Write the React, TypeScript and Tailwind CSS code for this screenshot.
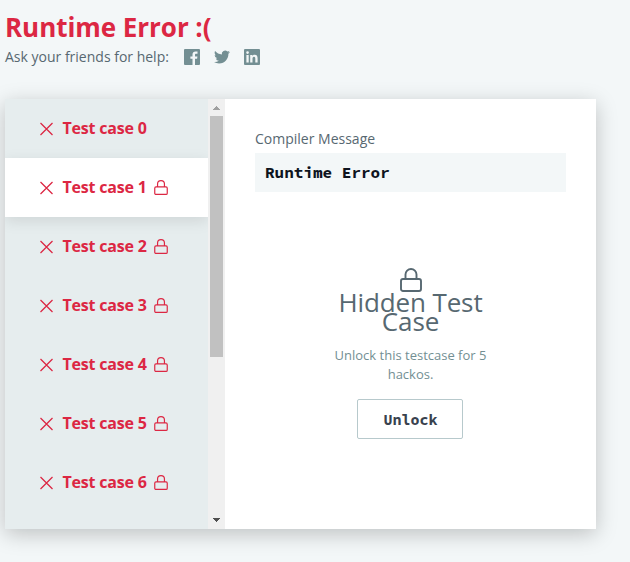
const CASES = [0, 1, 2, 3, 4, 5, 6];

function Lock({ className, stroke }: { className: string; stroke: number }) {
  return (
    <svg viewBox="0 0 22 24" className={className} fill="none" stroke="currentColor" strokeWidth={stroke} strokeLinejoin="round">
      <rect x="1" y="11" width="20" height="12" rx="2" />
      <path d="M5.500 11V6.500a5.500 5.500 0 0 1 11 0v4.500" />
    </svg>
  );
}

function Cross() {
  return (
    <svg viewBox="0 0 14 14" className="h-[14px] w-[14px]" fill="none" stroke="currentColor" strokeWidth="1.25">
      <path d="M1.500 1l12 12M13.500 1L1.500 13" />
    </svg>
  );
}

function Share() {
  return (
    <div className="ml-[15px] flex items-center gap-[14px] text-[#738f93]">
      <svg viewBox="0 0 16 16" className="h-4 w-4" fill="currentColor">
        <path d="M1 0h14a1 1 0 0 1 1 1v14a1 1 0 0 1-1 1h-4V9.8h2.1l.3-2.4H11V5.9c0-.7.2-1.2 1.2-1.2h1.3V2.5c-.2 0-1-.1-1.9-.1-1.9 0-3.1 1.100-3.100 3.200v1.800H6.400v2.400h2.100V16H1a1 1 0 0 1-1-1V1a1 1 0 0 1 1-1z" />
      </svg>
      <svg viewBox="0 0 24 24" className="h-4 w-4" fill="currentColor">
        <path d="M23.95 4.570a10 10 0 0 1-2.820.770 4.960 4.960 0 0 0 2.160-2.720c-.950.550-2.010.960-3.130 1.180a4.920 4.920 0 0 0-8.380 4.480C7.690 8.090 4.070 6.130 1.640 3.160a4.820 4.820 0 0 0-.670 2.480c0 1.710.870 3.210 2.190 4.100a4.900 4.900 0 0 1-2.230-.620v.060a4.920 4.920 0 0 0 3.950 4.830 5 5 0 0 1-2.210.080 4.940 4.940 0 0 0 4.600 3.420A9.870 9.870 0 0 1 0 19.540a13.990 13.990 0 0 0 7.560 2.210c9.050 0 14-7.500 14-13.990v-.630a9.940 9.940 0 0 0 2.390-2.560z" />
      </svg>
      <svg viewBox="0 0 16 16" className="h-4 w-4">
        <rect width="16" height="16" rx="1" fill="currentColor" />
        <path fill="#f3f7f7" d="M2.400 6h2.300v7.600H2.400zM3.550 2.200a1.350 1.350 0 1 1 0 2.700 1.350 1.350 0 0 1 0-2.700zM6.200 6h2.200v1.050C8.800 6.300 9.600 5.800 10.700 5.800c2.300 0 2.900 1.500 2.900 3.600v4.200h-2.300V9.900c0-1-.1-2.100-1.300-2.100S8.500 8.800 8.500 9.900v3.700H6.200z" />
      </svg>
    </div>
  );
}

export default function App() {
  return (
    <div className="h-[562px] w-[630px] overflow-hidden bg-[#f3f7f8] pl-[5px] font-['Open_Sans',sans-serif] text-[#576871]">
      <h1 className="pt-[10px] text-[26px] leading-[35px] font-bold tracking-[-0.05px] text-[#dc2743]">Runtime Error :(</h1>
      <div className="flex h-[24px] items-center text-[14px]">
        <span className="mb-[2px]">Ask your friends for help:</span>
        <Share />
      </div>

      <div className="mt-[30px] flex h-[430px] w-[591px] bg-white shadow-[0_5px_20px_rgba(0,0,0,0.22)]">
        <div className="h-full w-[203px] bg-[#e6edee]">
          {CASES.map((n) => (
            <div
              key={n}
              className={`flex h-[59px] items-center pl-[34px] text-[#dc2743] ${n === 1 ? "relative bg-white shadow-[0_4px_14px_rgba(0,0,0,0.1)] [clip-path:inset(-20px_0)]" : ""}`}
            >
              <span className="mt-px"><Cross /></span>
              <span className="mb-[2px] ml-[9.5px] w-[86px] text-[16px] leading-6 font-bold tracking-[-0.2px] whitespace-nowrap">Test case {n}</span>
              {n > 0 && <Lock className="mb-px ml-[5.5px] h-[15px] w-[14px]" stroke={1.9} />}
            </div>
          ))}
        </div>

        <div className="flex w-[17px] flex-col items-center justify-between bg-[#f0f0f0]">
          <div className="flex w-full flex-col items-center">
            <div className="flex h-[17px] items-center justify-center">
              <svg viewBox="0 0 7 4" className="h-[4px] w-[7px]" shapeRendering="crispEdges"><path d="M0 4L3.500 0L7 4z" fill="#a0a0a0" /></svg>
            </div>
            <div className="h-[241px] w-[13px] bg-[#c1c1c1]" />
          </div>
          <div className="mb-px flex h-[17px] items-center justify-center">
            <svg viewBox="0 0 7 4" className="h-[4px] w-[7px]" shapeRendering="crispEdges"><path d="M0 0h7L3.500 4z" fill="#505050" /></svg>
          </div>
        </div>

        <div className="flex flex-1 flex-col px-[30px] pt-[30px]">
          <div className="text-[14px] leading-[20px]">Compiler Message</div>
          <div className="mt-[4px] h-[39px] bg-[#f3f7f8] pl-[10px] font-['Source_Code_Pro','DejaVu_Sans_Mono',monospace] text-[16px] leading-[39px] font-bold text-[#0e141e]">Runtime Error</div>
          <div className="mt-[76px] flex w-[160px] flex-col items-center self-center text-center">
            <Lock className="h-[24px] w-[22px]" stroke={1.9} />
            <div className="mt-px text-[26px] leading-[19px] tracking-[-0.12px]">Hidden Test Case</div>
            <p className="mt-[15px] text-[13px] leading-[19px] text-[#738f93]">Unlock this testcase for 5 hackos.</p>
            <button className="mt-[15px] mr-px h-[40px] w-[106px] rounded-[2px] border border-[#b7c9cc] bg-white pt-[2px] pl-px font-['Source_Code_Pro','DejaVu_Sans_Mono',monospace] text-[15px] font-bold text-[#39424e]">Unlock</button>
          </div>
        </div>
      </div>
    </div>
  );
}
